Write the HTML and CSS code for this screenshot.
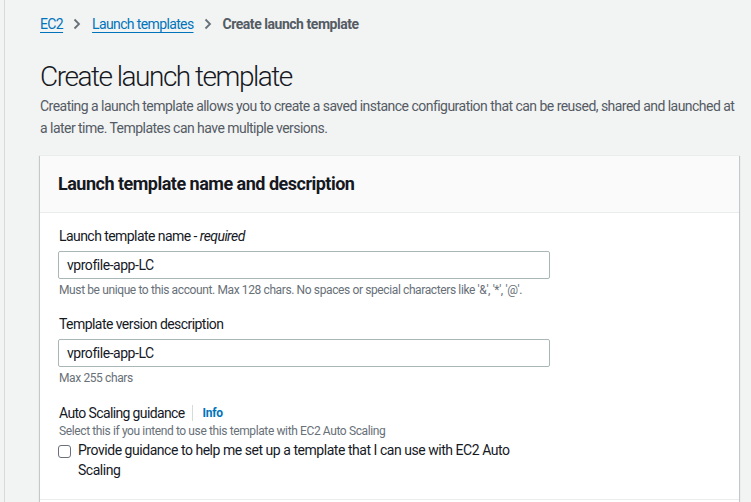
FILE: index.html
```html
<!DOCTYPE html>
<html lang="en">
<head>
<meta charset="utf-8">
<title>Create launch template</title>
<link rel="stylesheet" href="styles.css">
</head>
<body>
<div class="page">
  <main class="main">
    <nav class="breadcrumbs">
      <a class="crumb-link" href="#">EC2</a>
      <svg class="chev" width="8" height="12" viewBox="0 0 8 12"><path d="M1.5 1.5 L6 6 L1.5 10.5" fill="none" stroke="#687078" stroke-width="1.8"/></svg>
      <a class="crumb-link" href="#">Launch templates</a>
      <svg class="chev" width="8" height="12" viewBox="0 0 8 12"><path d="M1.5 1.5 L6 6 L1.5 10.5" fill="none" stroke="#687078" stroke-width="1.8"/></svg>
      <span class="crumb-current">Create launch template</span>
    </nav>
    <h1 class="title">Create launch template</h1>
    <p class="desc">Creating a launch template allows you to create a saved instance configuration that can be reused, shared and launched at a later time. Templates can have multiple versions.</p>

    <section class="card">
      <header class="card-header">
        <h2 class="card-title">Launch template name and description</h2>
      </header>
      <div class="card-body">
        <div class="field">
          <label class="label">Launch template name - <i>required</i></label>
          <div class="input">vprofile-app-LC</div>
          <div class="hint">Must be unique to this account. Max 128 chars. No spaces or special characters like '&amp;', '*', '@'.</div>
        </div>
        <div class="field field-2">
          <label class="label">Template version description</label>
          <div class="input">vprofile-app-LC</div>
          <div class="hint">Max 255 chars</div>
        </div>
        <div class="field field-3">
          <div class="label-row">
            <span class="label-inline">Auto Scaling guidance</span>
            <span class="divider"></span>
            <a class="info" href="#">Info</a>
          </div>
          <div class="hint hint-tight">Select this if you intend to use this template with EC2 Auto Scaling</div>
          <div class="check-row">
            <span class="checkbox"></span>
            <span class="check-label">Provide guidance to help me set up a template that I can use with EC2 Auto Scaling</span>
          </div>
        </div>
      </div>
      <div class="card-next"></div>
    </section>
  </main>
</div>
</body>
</html>
```

FILE: styles.css
```css
* { box-sizing: border-box; }
html, body {
  margin: 0;
  padding: 0;
  background: #f2f3f3;
  font-family: Roboto, "Liberation Sans", Arial, sans-serif;
  color: #16191f;
  font-size: 14px;
  letter-spacing: -0.045em;
}
.page {
  padding-left: 4px;
  min-height: 502px;
}
.main {
  border-left: 1px solid #d5dbdb;
  padding: 14px 12px 0 35px;
  min-height: 502px;
}
.breadcrumbs {
  display: flex;
  align-items: center;
  height: 20px;
  line-height: 20px;
  font-size: 14px;
}
.crumb-link {
  color: #0073bb;
  text-decoration: underline;
  text-underline-offset: 3px;
}
.chev {
  margin: 0 11px 0 10px;
}
.crumb-current {
  color: #545b64;
  font-weight: 700;
  letter-spacing: -0.033em;
}
.title {
  margin: 25px 0 0 0;
  font-size: 28px;
  line-height: 36px;
  font-weight: 300;
  color: #16191f;
  letter-spacing: -0.053em;
}
.desc {
  margin: 0;
  font-size: 14px;
  line-height: 22px;
  color: #545b64;
  letter-spacing: -0.038em;
}
.card {
  margin-top: 16px;
  background: #fff;
  border-top: 1px solid #eaeded;
  box-shadow: 0 1px 1px 0 rgba(0,28,36,.3), 1px 1px 1px 0 rgba(0,28,36,.15), -1px 1px 1px 0 rgba(0,28,36,.15);
}
.card-header {
  background: #fafafa;
  border-bottom: 1px solid #eaeded;
  padding: 16px 18px 17px 18px;
}
.card-title {
  margin: 0;
  font-size: 18px;
  line-height: 23px;
  font-weight: 700;
  color: #16191f;
  letter-spacing: -0.028em;
}
.card-body {
  padding: 12px 18px 19px 18px;
  border-bottom: 1px solid #eaeded;
}
.card-next {
  height: 20px;
}
.field {
  width: 492px;
}
.field-2 { margin-top: 15px; }
.field-3 { margin-top: 17px; }
.label {
  display: block;
  line-height: 22px;
  font-size: 14px;
  color: #16191f;
  padding-left: 1px;
  letter-spacing: -0.04em;
}
.input {
  margin-top: 4px;
  height: 28px;
  border: 1px solid #aab7b8;
  border-radius: 2px;
  padding: 0 8px;
  line-height: 26px;
  font-size: 14px;
  color: #16191f;
  background: #fff;
  letter-spacing: -0.033em;
}
.hint {
  margin-top: 3px;
  font-size: 12px;
  line-height: 16px;
  color: #687078;
  padding-left: 1px;
  letter-spacing: -0.032em;
}
.hint-tight { margin-top: 0; }
.label-row {
  display: flex;
  align-items: center;
  height: 20px;
  padding-left: 1px;
}
.label-inline {
  line-height: 20px;
}
.divider {
  width: 1px;
  height: 16px;
  background: #d5dbdb;
  margin: 0 10px 0 7px;
}
.info {
  color: #0073bb;
  font-weight: 700;
  font-size: 12px;
  text-decoration: none;
  letter-spacing: -0.02em;
}
.check-row {
  display: flex;
  align-items: flex-start;
  margin-top: 1px;
}
.checkbox {
  flex: none;
  width: 13px;
  height: 13px;
  margin: 5px 7px 0 0;
  border: 1px solid #687078;
  border-radius: 3px;
  background: #fff;
}
.check-label {
  line-height: 20px;
  font-size: 14px;
  color: #16191f;
  letter-spacing: -0.033em;
}
```
